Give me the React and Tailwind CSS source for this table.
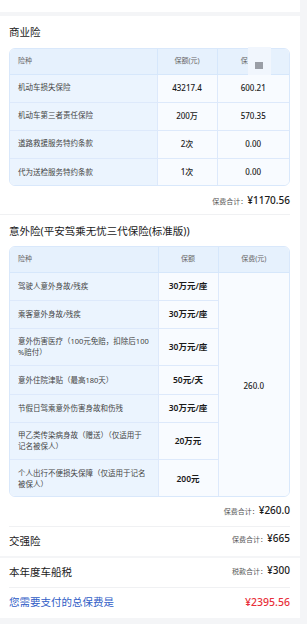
const cn = { fontFamily: '"Noto Sans", "Noto Sans CJK SC", sans-serif' };

const commercial = [
  ["机动车损失保险", "43217.4", "600.21"],
  ["机动车第三者责任保险", "200万", "570.35"],
  ["道路救援服务特约条款", "2次", "0.00"],
  ["代为送检服务特约条款", "1次", "0.00"],
];

const accident = [
  ["驾驶人意外身故/残疾", "30万元/座", "h-[28px]", "pr-[9px]"],
  ["乘客意外身故/残疾", "30万元/座", "h-[28px]", "pr-[9px]"],
  ["意外伤害医疗（100元免赔，扣除后100\n%赔付）", "30万元/座", "h-[37px]", "pr-0"],
  ["意外住院津贴（最高180天）", "50元/天", "h-[29px]", "pr-[9px]"],
  ["节假日驾乘意外伤害身故和伤残", "30万元/座", "h-[28px]", "pr-[9px]"],
  ["甲乙类传染病身故（赠送）（仅适用于记名被保人）", "20万元", "h-[37px]", "pr-[9px]"],
  ["个人出行不便损失保障（仅适用于记名被保人）", "200元", "h-[38px]", "pr-[9px]"],
];

function Total({ label, value }) {
  return (
    <div className="flex items-baseline justify-end">
      <span className="text-[7px] text-[#555]">{label}：</span>
      <span className="text-[10px] font-medium text-[#1a1a1a]">{value}</span>
    </div>
  );
}

function HeadCell({ children, className = "" }) {
  return (
    <th className={"h-[25px] bg-[#e6f1fd] border-b border-[#d6e7fb] text-[7px] font-normal text-[#666] " + className}>
      {children}
    </th>
  );
}

export default function App() {
  return (
    <div className="w-[307px] h-[624px] overflow-hidden bg-[#f4f5f7] flex" style={cn}>
      <div className="w-[300px] flex flex-col">
        <div className="h-[12px] bg-white" />
        <div className="mt-[4px] h-[602px] bg-white pl-[9px] pr-[10px] flex flex-col">
          {/* 商业险 */}
          <div className="pt-[9px] h-[23px] text-[10.5px] leading-[14px] text-[#1a1a1a]">商业险</div>
          <div className="relative mt-[9px] rounded-[6px] border border-[#d9e8fb] overflow-hidden">
            <table className="w-full border-collapse">
              <thead>
                <tr>
                  <HeadCell className="w-[147px] text-left pl-[8px]">险种</HeadCell>
                  <HeadCell className="w-[60px] border-l">保额(元)</HeadCell>
                  <HeadCell className="border-l">保费(元)</HeadCell>
                </tr>
              </thead>
              <tbody>
                {commercial.map(([n, a, p], i) => (
                  <tr key={n} className={"h-[28px] " + (i < 3 ? "border-b border-[#dde9fb]" : "")}>
                    <td className="bg-[#ebf4fe] pl-[8px] text-[7.5px] text-[#444]">{n}</td>
                    <td className="bg-[#f8fbff] border-l border-[#dde9fb] text-center text-[8px] font-medium text-[#1a1a1a]">{a}</td>
                    <td className="bg-[#f8fbff] border-l border-[#dde9fb] text-center text-[8px] font-medium text-[#1a1a1a]">{p}</td>
                  </tr>
                ))}
              </tbody>
            </table>
          </div>
          <div className="absolute left-[248px] top-[47px] w-[23px] h-[28px] bg-[#f1f6fd] flex items-end justify-center pb-[6px]">
            <div className="w-[8px] h-[7px] bg-[#9a9ea6] mr-[2px]" />
          </div>
          <div className="mt-[8px] h-[14px] flex items-center justify-end">
            <Total label="保费合计" value="¥1170.56" />
          </div>
          <div className="mt-[6px] -ml-[9px] h-px bg-[#f0f1f3]" />

          {/* 意外险 */}
          <div className="mt-[9px] h-[14px] text-[10.5px] leading-[14px] text-[#1a1a1a]">意外险(平安驾乘无忧三代保险(标准版))</div>
          <div className="mt-[8px] rounded-[6px] border border-[#d9e8fb] overflow-hidden">
            <table className="w-full border-collapse table-fixed">
              <thead>
                <tr>
                  <HeadCell className="w-[148px] text-left pl-[8px] h-[26px]">险种</HeadCell>
                  <HeadCell className="w-[60px] border-l h-[26px]">保额</HeadCell>
                  <HeadCell className="border-l h-[26px]">保费(元)</HeadCell>
                </tr>
              </thead>
              <tbody>
                {accident.map(([n, a, h, pr], i) => (
                  <tr key={n} className={h}>
                    <td className={"bg-[#ebf4fe] pl-[8px] text-[7.5px] leading-[11px] text-[#444] whitespace-pre-line " + pr + (i < 6 ? " border-b border-[#dde9fb]" : "")}>{n}</td>
                    <td className={"bg-[#f8fbff] border-l border-[#dde9fb] text-center text-[8.5px] font-semibold text-[#1a1a1a] " + (i < 6 ? "border-b" : "")}>{a}</td>
                    {i === 0 && (
                      <td rowSpan={7} className="bg-[#f8fbff] border-l border-[#dde9fb] text-center text-[8px] font-medium text-[#1a1a1a]">260.0</td>
                    )}
                  </tr>
                ))}
              </tbody>
            </table>
          </div>
          <div className="mt-[7px] h-[14px] flex items-center justify-end">
            <Total label="保费合计" value="¥260.0" />
          </div>
          <div className="mt-[8px] h-px bg-[#f0f1f3]" />

          {/* 交强险 */}
          <div className="h-[29px] flex items-center justify-between">
            <span className="text-[10.5px] text-[#1a1a1a] mt-[1px]">交强险</span>
            <div className="-mt-[5px]"><Total label="保费合计" value="¥665" /></div>
          </div>
          <div className="-ml-[9px] -mr-[10px] h-[2px] bg-[#f4f5f7]" />

          {/* 车船税 */}
          <div className="h-[30px] flex items-center justify-between">
            <span className="text-[10.5px] text-[#1a1a1a] mt-[1px]">本年度车船税</span>
            <div className="-mt-[3px]"><Total label="税款合计" value="¥300" /></div>
          </div>
          <div className="h-px bg-[#f0f1f3]" />

          {/* 总保费 */}
          <div className="h-[30px] flex items-center justify-between">
            <span className="text-[10.5px] text-[#2f5cc6]">您需要支付的总保费是</span>
            <span className="text-[10.5px] font-medium text-[#e8303a]">¥2395.56</span>
          </div>
        </div>
      </div>
    </div>
  );
}
